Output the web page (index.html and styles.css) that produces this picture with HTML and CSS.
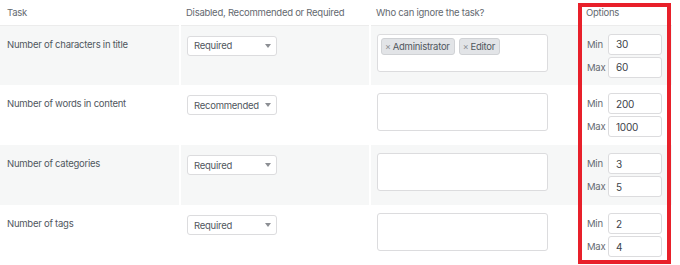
FILE: index.html
```html
<!DOCTYPE html>
<html lang="en">
<head>
    <meta charset="UTF-8">
    <title>Task Settings</title>
    <link rel="stylesheet" href="styles.css">
</head>
<body>
    <div class="wrap">
        <table class="tasks">
            <thead>
                <tr>
                    <th class="col-task">Task</th>
                    <th class="col-level">Disabled, Recommended or Required</th>
                    <th class="col-roles">Who can ignore the task?</th>
                    <th class="col-options">Options</th>
                </tr>
            </thead>
            <tbody>
                <tr class="alt">
                    <td class="col-task">Number of characters in title</td>
                    <td class="col-level">
                        <div class="select"><span>Required</span><svg width="6" height="4" viewBox="0 0 6 4"><path d="M0 0h6L3 4z" fill="#8c8f94"/></svg></div>
                    </td>
                    <td class="col-roles">
                        <div class="tagbox">
                            <span class="tag"><span class="x">×</span>Administrator</span>
                            <span class="tag"><span class="x">×</span>Editor</span>
                        </div>
                    </td>
                    <td class="col-options">
                        <div class="range">
                            <label>Min</label><input type="text" value="30">
                            <label>Max</label><input type="text" value="60">
                        </div>
                    </td>
                </tr>
                <tr>
                    <td class="col-task">Number of words in content</td>
                    <td class="col-level">
                        <div class="select"><span>Recommended</span><svg width="6" height="4" viewBox="0 0 6 4"><path d="M0 0h6L3 4z" fill="#8c8f94"/></svg></div>
                    </td>
                    <td class="col-roles"><div class="tagbox"></div></td>
                    <td class="col-options">
                        <div class="range">
                            <label>Min</label><input type="text" value="200">
                            <label>Max</label><input type="text" value="1000">
                        </div>
                    </td>
                </tr>
                <tr class="alt">
                    <td class="col-task">Number of categories</td>
                    <td class="col-level">
                        <div class="select"><span>Required</span><svg width="6" height="4" viewBox="0 0 6 4"><path d="M0 0h6L3 4z" fill="#8c8f94"/></svg></div>
                    </td>
                    <td class="col-roles"><div class="tagbox"></div></td>
                    <td class="col-options">
                        <div class="range">
                            <label>Min</label><input type="text" value="3">
                            <label>Max</label><input type="text" value="5">
                        </div>
                    </td>
                </tr>
                <tr>
                    <td class="col-task">Number of tags</td>
                    <td class="col-level">
                        <div class="select"><span>Required</span><svg width="6" height="4" viewBox="0 0 6 4"><path d="M0 0h6L3 4z" fill="#8c8f94"/></svg></div>
                    </td>
                    <td class="col-roles"><div class="tagbox"></div></td>
                    <td class="col-options">
                        <div class="range">
                            <label>Min</label><input type="text" value="2">
                            <label>Max</label><input type="text" value="4">
                        </div>
                    </td>
                </tr>
            </tbody>
        </table>
        <div class="highlight"></div>
    </div>
</body>
</html>
```

FILE: styles.css
```css
* {
    margin: 0;
    padding: 0;
    box-sizing: border-box;
}

body {
    background: #fff;
    color: #50575e;
    font-family: Inter, 'Liberation Sans', sans-serif;
    font-size: 9.5px;
    letter-spacing: -0.25px;
    overflow: hidden;
}

.wrap {
    position: relative;
    width: 680px;
    height: 265px;
}

.tasks {
    width: 672px;
    border-collapse: collapse;
    table-layout: fixed;
}

.tasks th {
    height: 25px;
    font-weight: normal;
    text-align: left;
    color: #646970;
    border-bottom: 1px solid #ececec;
    vertical-align: middle;
}

.tasks td {
    height: 60px;
    vertical-align: top;
    border-left: 2px solid #fff;
}

.tasks td:first-child {
    border-left: none;
}

.tasks tr.alt td {
    background: #f6f7f7;
}

.col-task {
    width: 180px;
    padding-left: 7px;
}

td.col-task {
    padding-top: 12px;
    line-height: 14px;
}

.col-level {
    width: 190px;
    padding-left: 6px;
}

td.col-level {
    padding-top: 10px;
}

.col-roles {
    width: 209px;
    padding-left: 6px;
}

td.col-roles {
    padding-top: 8px;
}

.col-options {
    padding-left: 7px;
}

td.col-options {
    padding-top: 8px;
}

.select {
    width: 90px;
    height: 20px;
    display: flex;
    align-items: center;
    justify-content: space-between;
    padding: 0 5px 0 6px;
    background: #fff;
    border: 1px solid #dcdcde;
    border-radius: 3px;
    color: #50575e;
}

.tagbox {
    width: 171px;
    height: 38px;
    background: #fff;
    border: 1px solid #dcdcde;
    border-radius: 3px;
    padding: 3px;
    display: flex;
    align-items: flex-start;
    gap: 4px;
}

.tag {
    height: 17px;
    display: flex;
    align-items: center;
    padding: 0 4px 0 3px;
    background: #e2e4e7;
    border: 1px solid #d0d2d5;
    border-radius: 3px;
    color: #50575e;
}

.tag .x {
    color: #8c8f94;
    font-size: 9px;
    margin-right: 2px;
}

.range {
    display: grid;
    grid-template-columns: 21px 54px;
    row-gap: 2px;
    align-items: center;
}

.range label {
    color: #646970;
}

.range input {
    width: 54px;
    height: 21px;
    border: 1px solid #dcdcde;
    border-radius: 3px;
    padding: 0 7px;
    font-family: inherit;
    font-size: 10px;
    letter-spacing: -0.2px;
    color: #3c434a;
    background: #fff;
    outline: none;
}

.highlight {
    position: absolute;
    left: 578px;
    top: 3px;
    width: 93px;
    height: 261px;
    border: 4px solid #e8202a;
    pointer-events: none;
}
```
